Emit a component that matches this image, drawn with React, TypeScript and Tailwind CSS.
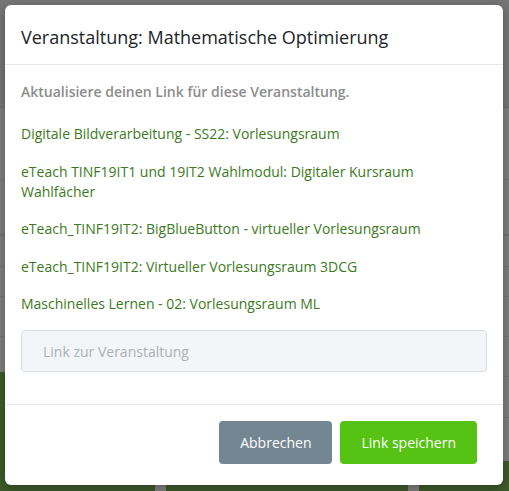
import React from "react";

const links = [
  "Digitale Bildverarbeitung - SS22: Vorlesungsraum",
  "eTeach TINF19IT1 und 19IT2 Wahlmodul: Digitaler Kursraum Wahlfächer",
  "eTeach_TINF19IT2: BigBlueButton - virtueller Vorlesungsraum",
  "eTeach_TINF19IT2: Virtueller Vorlesungsraum 3DCG",
  "Maschinelles Lernen - 02: Vorlesungsraum ML",
];

export default function App() {
  return (
    <div
      className="relative w-[509px] h-[491px] overflow-hidden bg-[#7f7f7f]"
      style={{ fontFamily: '"Open Sans", "Noto Sans", sans-serif' }}
    >
      {/* dimmed page behind */}
      <div className="flex flex-col h-full">
        <div className="h-[108px] shrink-0 bg-[#767676] border-b border-[#6f6f6f]" />
        <div className="h-[72px] shrink-0 border-b border-[#747474]" />
        <div className="h-[56px] shrink-0 border-b-2 border-[#727272]" />
        <div className="h-[31px] shrink-0 border-b border-[#747474]" />
        <div className="h-[30px] shrink-0 border-b border-[#747474]" />
        <div className="h-[40px] shrink-0 border-b border-[#747474]" />
        <div className="flex-1 flex">
          <div className="flex-1 flex flex-col">
            <div className="h-[35px] shrink-0" />
            <div className="flex-1 bg-[#3f5a2b] flex items-end">
              <div className="ml-[155px] w-[11px] h-[8px] bg-[#808080]" />
              <div className="ml-[242px] w-[11px] h-[8px] bg-[#808080]" />
            </div>
          </div>
          <div className="w-[6px] flex flex-col">
            <div className="h-[40px] shrink-0 border-b border-[#747474]" />
            <div className="h-[41px] shrink-0 border-b border-[#747474]" />
            <div className="h-[43px] shrink-0" />
            <div className="flex-1 bg-[#3f5a2b]" />
          </div>
        </div>
      </div>

      {/* modal */}
      <div className="absolute left-[5px] top-[5px] w-[498px] h-[480px] bg-white rounded-[6px] shadow-[0_3px_12px_rgba(0,0,0,0.3)] flex flex-col">
        <div className="h-[60px] shrink-0 flex items-center px-4 border-b border-[#e6e9ec]">
          <h2 className="text-[18px] leading-[26px] text-[#212529] pt-[4px]">
            Veranstaltung: Mathematische Optimierung
          </h2>
        </div>
        <div className="flex-1 px-4 pt-[17px]">
          <p className="text-[14px] leading-[20px] font-semibold text-[#8c8c8c]">
            Aktualisiere deinen Link für diese Veranstaltung.
          </p>
          <div className="mt-[22px] flex flex-col gap-[17.5px]">
            {links.map((l) => (
              <div key={l} className="text-[14px] leading-[20px] text-[#3c7a1e] pr-[40px]">
                {l}
              </div>
            ))}
          </div>
          <div className="mt-[16px] h-[42px] rounded-[4px] border border-[#d8dde3] bg-[#f3f6f9] flex items-center pl-[21px] text-[14px] text-[#aab0b5]">
            Link zur Veranstaltung
          </div>
        </div>
        <div className="h-[81px] shrink-0 border-t border-[#e6e9ec] flex items-start justify-end gap-[8px] pt-[16px] pr-[26px]">
          <button className="h-[43px] px-[21px] rounded-[4px] bg-[#738691] text-white text-[14px]">
            Abbrechen
          </button>
          <button className="h-[43px] px-[21px] rounded-[4px] bg-[#55c214] text-white text-[14px]">
            Link speichern
          </button>
        </div>
      </div>
    </div>
  );
}
